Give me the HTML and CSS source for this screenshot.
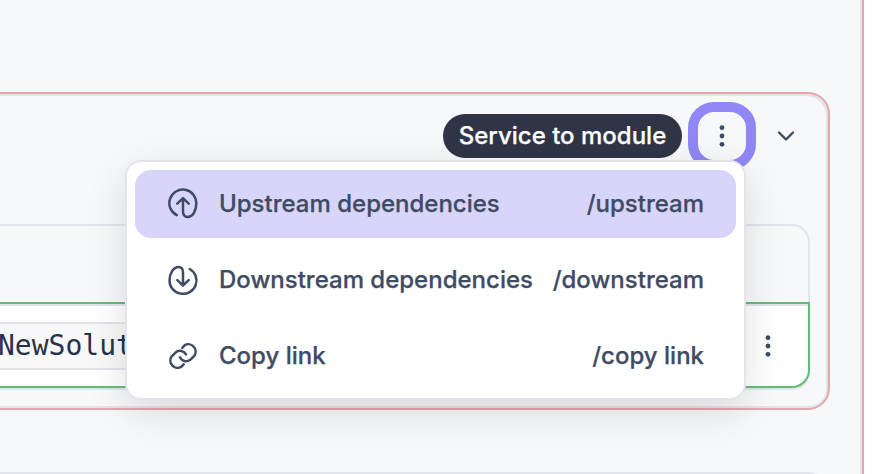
FILE: index.html
```html
<!DOCTYPE html>
<html lang="en">
<head>
<meta charset="utf-8">
<title>Service to module</title>
<link rel="stylesheet" href="styles.css">
</head>
<body>
<main class="panel">
  <section class="card">
    <header class="card-header">
      <span class="pill">Service to module</span>
      <button class="more more-focused" aria-label="More actions">
        <svg class="dots" viewBox="0 0 6 24"><circle cx="3" cy="3.7" r="2.4"/><circle cx="3" cy="12" r="2.4"/><circle cx="3" cy="20.3" r="2.4"/></svg>
      </button>
      <svg class="chevron" viewBox="0 0 20 12"><path d="M3 2.5 10 9.5 17 2.5"/></svg>
    </header>
    <div class="table">
      <div class="table-head"></div>
      <div class="table-row">
        <code class="code">NewSolut</code>
        <button class="more" aria-label="Row actions">
          <svg class="dots" viewBox="0 0 6 24"><circle cx="3" cy="3.7" r="2.4"/><circle cx="3" cy="12" r="2.4"/><circle cx="3" cy="20.3" r="2.4"/></svg>
        </button>
      </div>
    </div>
  </section>
  <section class="next-card"></section>
</main>
<div class="menu">
  <div class="item item-active">
    <svg class="icon" viewBox="0 0 32 32"><path d="M9.8 27.2A13.5 13.5 0 1 1 29.3 15.8C29.3 23 25.8 28.9 20.6 28.9Q16 28.9 16 23.5V10.5M10.3 15.6 16 10.2 21.7 15.6"/></svg>
    <span class="label">Upstream dependencies</span><span class="command">/upstream</span>
  </div>
  <div class="item">
    <svg class="icon" viewBox="0 0 32 32"><path d="M22.7 5A13.5 13.3 0 1 1 2.5 16.5C2.5 9.5 6.5 3.1 11.5 3.1Q16 3.1 16 8.5V21M10.3 16.2 16 21.6 21.7 16.2"/></svg>
    <span class="label">Downstream dependencies</span><span class="command">/downstream</span>
  </div>
  <div class="item">
    <svg class="icon" viewBox="0 0 32 32"><path d="M15.3 7.8 17.8 5.2A7.3 7.3 0 0 1 27.3 15.8L23.2 19.8A6.8 6.8 0 0 1 12.9 17.3M19.1 14.5A6.8 6.8 0 0 0 8.8 12.3L4.7 16.3A7.3 7.3 0 0 0 14.2 26.9L16.7 24.4"/></svg>
    <span class="label">Copy link</span><span class="command">/copy link</span>
  </div>
</div>
</body>
</html>
```
FILE: styles.css
```css
* { box-sizing: border-box; }
body {
  margin: 0;
  height: 474px;
  overflow: hidden;
  background: #fff;
  color: #3f4b63;
  font: 500 24px/32px Inter, sans-serif;
  -webkit-text-stroke: .25px currentColor;
}
.panel {
  width: 864px;
  height: 474px;
  padding-top: 92px;
  overflow: hidden;
  background: #f6f8fa;
  border-right: 2px solid #e8a5a7;
  box-shadow: inset -2px 0 #e1e4ea;
}
.card {
  width: 830px;
  height: 318px;
  border: 2px solid #e8a5a7;
  border-left: 0;
  border-radius: 0 22px 22px 0;
  box-shadow: inset -2px 2px #e1e4ea, inset 0 -2px #e1e4ea;
}
.card-header {
  display: flex;
  align-items: center;
  justify-content: flex-end;
  height: 130px;
  padding: 0 32px 46px 0;
}
.pill {
  width: 239px;
  height: 44px;
  border-radius: 22px;
  background: #2f3546;
  color: #fff;
  line-height: 44px;
  text-align: center;
  white-space: nowrap;
}
.more {
  display: flex;
  align-items: center;
  justify-content: center;
  width: 48px;
  height: 48px;
  padding: 0;
  border: 0;
  background: transparent;
}
.more-focused {
  width: 68px;
  height: 68px;
  margin: 0 20px 0 6px;
  border: 10px solid #9086f5;
  border-radius: 26px;
}
.dots { width: 6px; height: 24px; fill: #3f4b63; }
.chevron {
  width: 20px;
  height: 12px;
  fill: none;
  stroke: #3f4b63;
  stroke-width: 2.4;
  stroke-linecap: round;
  stroke-linejoin: round;
}
.table { width: 810px; }
.table-head {
  height: 78px;
  border: solid #e1e4ea;
  border-width: 2px 2px 0 0;
  border-radius: 0 18px 0 0;
}
.table-row {
  display: flex;
  align-items: center;
  justify-content: space-between;
  height: 86px;
  padding: 2px 16px 0 0;
  background: #fff;
  border: solid #62bc79;
  border-width: 2px 2px 2px 0;
  border-radius: 0 0 18px 0;
  box-shadow: inset 0 2px #e1e4ea, 0 2px #e1e4ea;
}
.code {
  height: 48px;
  padding-right: 12px;
  margin-left: -2px;
  border: solid #e1e4ea;
  border-width: 2px 0;
  background: #f8f8f9;
  color: #273248;
  font: 400 28px/44px "DejaVu Sans Mono", monospace;
  -webkit-text-stroke: 0;
}
.next-card {
  width: 830px;
  height: 60px;
  margin-top: 62px;
  border: 2px solid #e1e4ea;
  border-left: 0;
  border-radius: 0 22px 0 0;
}
.menu {
  position: absolute;
  top: 160px;
  left: 125px;
  display: flex;
  flex-direction: column;
  gap: 8px;
  width: 621px;
  height: 240px;
  padding: 8px;
  background: #fff;
  border: 2px solid #e1e5ea;
  border-radius: 16px;
  box-shadow: 0 12px 40px rgba(0, 0, 0, .12);
}
.item {
  display: flex;
  align-items: center;
  height: 68px;
  padding: 0 32px;
  border-radius: 16px;
  white-space: nowrap;
}
.item-active { background: #d8d5fb; }
.icon {
  width: 32px;
  height: 32px;
  margin-right: 20px;
  fill: none;
  stroke: #3f4b63;
  stroke-width: 2.5;
  stroke-linecap: round;
  stroke-linejoin: round;
}
.command { margin-left: auto; }
```
